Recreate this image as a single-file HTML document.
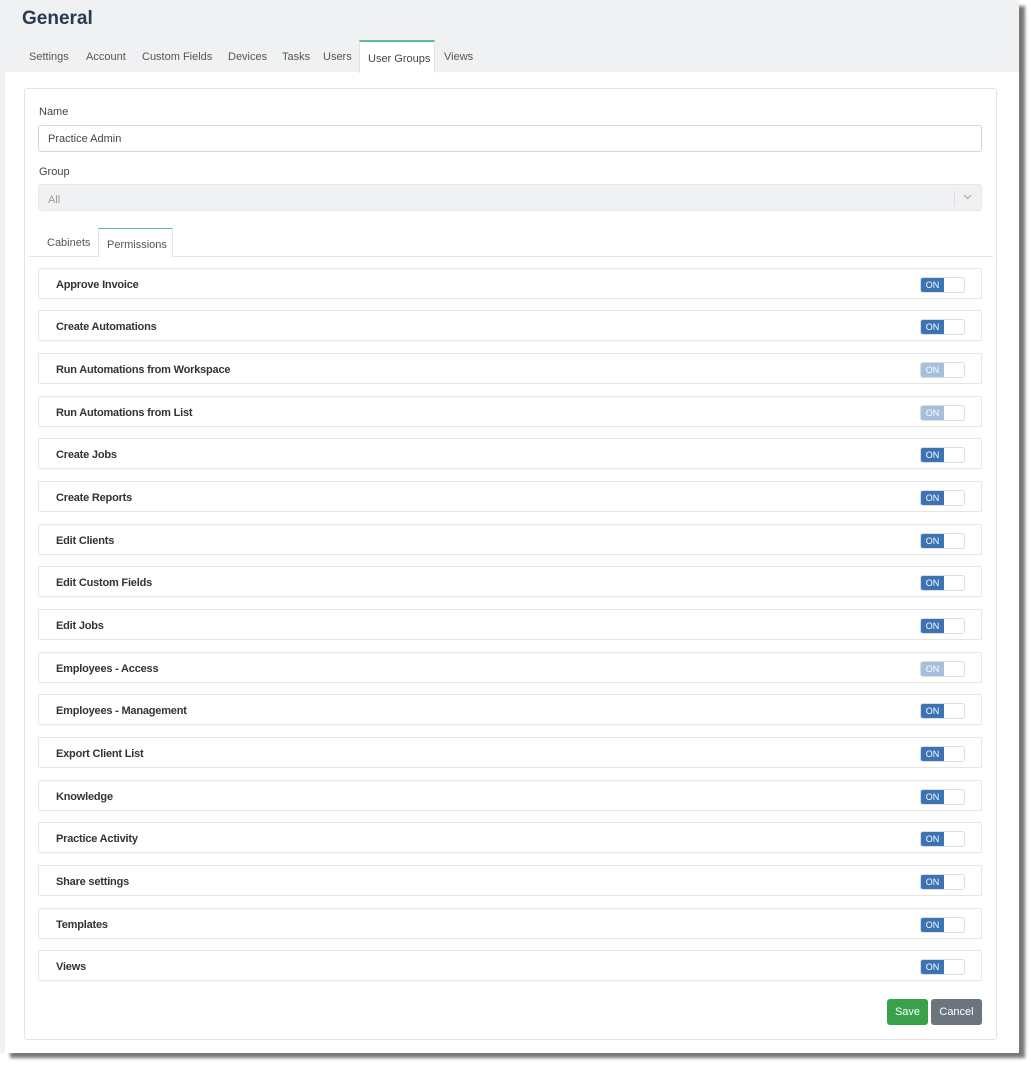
<!DOCTYPE html>
<html><head><meta charset="utf-8"><style>
*{box-sizing:border-box;margin:0;padding:0}
body{width:1031px;height:1065px;background:#fff;font-family:"Liberation Sans",sans-serif;position:relative;overflow:hidden;color:#333}
.shadow{position:absolute;left:10px;top:6px;width:1015px;height:1052px;background:#777;filter:blur(1.5px)}
.page{position:absolute;left:0;top:0;width:1019px;height:1053px;background:#fff}
.top{position:absolute;left:0;top:0;width:1019px;height:72px;background:#f0f1f3}
.lstrip{position:absolute;left:0;top:72px;width:5px;height:981px;background:#f0f1f3}
h1{position:absolute;left:22px;top:8px;font-size:19px;font-weight:bold;color:#283a52}
.tab{position:absolute;top:51px;font-size:11px;color:#555}
.tabact{position:absolute;left:359px;top:40px;width:76px;height:33px;background:#fff;border-top:2px solid #5cc08e;border-left:1px solid #e3e3e3;border-right:1px solid #e3e3e3;font-size:11px;color:#444;padding:11px 0 0 8px}
.card{position:absolute;left:24px;top:88px;width:973px;height:952px;border:1px solid #e3e3e3;border-radius:3px}
.lbl{position:absolute;left:39px;font-size:11px;color:#444}
.input{position:absolute;left:38px;width:944px;height:27px;border:1px solid #d5d5d5;border-radius:3px;font-size:11px;padding:7px 9px;color:#444}
.sel{background:#f0f1f3;border-color:#e8e8e8;color:#999}
.subline{position:absolute;left:29px;top:256px;width:964px;height:1px;background:#e3e3e3}
.row{position:absolute;left:38px;width:944px;height:31px;border:1px solid #e6e6e6;border-radius:2px;font-size:11px;font-weight:bold;color:#333;padding:10px 0 0 17px;letter-spacing:-0.2px}
.tg{position:absolute;left:881px;top:8px;width:45px;height:16px;border:1px solid #ddd;border-radius:3px;background:#fff;overflow:hidden;letter-spacing:0}
.tg span{position:absolute;left:0;top:0;width:23px;height:14px;background:#3b73b5;color:#fff;font-size:9px;font-weight:normal;text-align:center;line-height:14px}
.tg.f span{background:#a5bfdd}
.btn{position:absolute;top:999px;height:26px;border-radius:3px;color:#fff;font-size:11px;text-align:center;line-height:26px}
</style></head><body>
<div class="shadow"></div>
<div class="page"></div>
<div class="top"></div><div class="lstrip"></div>
<h1>General</h1>
<div class="tab" style="left:29px">Settings</div>
<div class="tab" style="left:86px">Account</div>
<div class="tab" style="left:142px">Custom Fields</div>
<div class="tab" style="left:228px">Devices</div>
<div class="tab" style="left:282px">Tasks</div>
<div class="tab" style="left:323px">Users</div>
<div class="tabact">User Groups</div>
<div class="tab" style="left:444px">Views</div>
<div class="card"></div>
<div class="lbl" style="top:106px">Name</div>
<div class="input" style="top:125px">Practice Admin</div>
<div class="lbl" style="top:166px">Group</div>
<div class="input sel" style="top:184px;padding-top:9px">All
<div style="position:absolute;right:26px;top:5px;width:1px;height:16px;background:#ddd"></div>
<svg style="position:absolute;right:9px;top:9px" width="9" height="6" viewBox="0 0 9 6"><path d="M1 1l3.5 3.5L8 1" fill="none" stroke="#aaa" stroke-width="1.2"/></svg></div>
<div class="tab" style="left:47px;top:237px">Cabinets</div>
<div style="position:absolute;left:98px;top:228px;width:75px;height:29px;background:#fff;border-top:1px solid #5cc08e;border-left:1px solid #e3e3e3;border-right:1px solid #e3e3e3;font-size:11px;color:#555;padding:10px 0 0 8px;z-index:2">Permissions</div>
<div class="subline"></div>
<div class="row" style="top:268px">Approve Invoice<div class="tg"><span>ON</span></div></div>
<div class="row" style="top:310px">Create Automations<div class="tg"><span>ON</span></div></div>
<div class="row" style="top:353px">Run Automations from Workspace<div class="tg f"><span>ON</span></div></div>
<div class="row" style="top:396px">Run Automations from List<div class="tg f"><span>ON</span></div></div>
<div class="row" style="top:438px">Create Jobs<div class="tg"><span>ON</span></div></div>
<div class="row" style="top:481px">Create Reports<div class="tg"><span>ON</span></div></div>
<div class="row" style="top:524px">Edit Clients<div class="tg"><span>ON</span></div></div>
<div class="row" style="top:566px">Edit Custom Fields<div class="tg"><span>ON</span></div></div>
<div class="row" style="top:609px">Edit Jobs<div class="tg"><span>ON</span></div></div>
<div class="row" style="top:652px">Employees - Access<div class="tg f"><span>ON</span></div></div>
<div class="row" style="top:694px">Employees - Management<div class="tg"><span>ON</span></div></div>
<div class="row" style="top:737px">Export Client List<div class="tg"><span>ON</span></div></div>
<div class="row" style="top:780px">Knowledge<div class="tg"><span>ON</span></div></div>
<div class="row" style="top:822px">Practice Activity<div class="tg"><span>ON</span></div></div>
<div class="row" style="top:865px">Share settings<div class="tg"><span>ON</span></div></div>
<div class="row" style="top:908px">Templates<div class="tg"><span>ON</span></div></div>
<div class="row" style="top:950px">Views<div class="tg"><span>ON</span></div></div>
<div class="btn" style="left:887px;width:41px;background:#38a14a">Save</div>
<div class="btn" style="left:931px;width:51px;background:#6c757d">Cancel</div>
</body></html>
